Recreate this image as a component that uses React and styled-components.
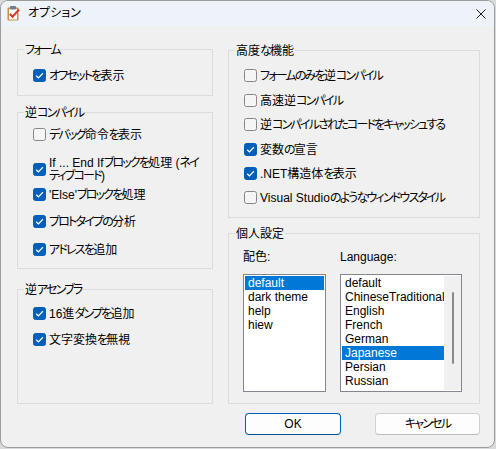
import React from "react";
import styled, { createGlobalStyle } from "styled-components";

const GlobalStyle = createGlobalStyle`
  html, body { margin: 0; padding: 0; }
  body {
    background: #d9dadc;
    font-family: "Liberation Sans", "Noto Sans CJK JP", sans-serif;
    font-size: 12px;
    color: #000;
  }
  * { box-sizing: border-box; }
`;

const Window = styled.div`
  width: 495px;
  height: 448px;
  border: 1px solid #9c9c9c;
  border-radius: 8px;
  overflow: hidden;
  background: #f0f0f0;
  display: flex;
  flex-direction: column;
  font-family: "Liberation Sans", "Noto Sans CJK JP", sans-serif;
  font-feature-settings: "palt";
  font-size: 12px;
`;

const TitleBar = styled.div`
  height: 25px;
  flex: none;
  background: #eef3f9;
  display: flex;
  align-items: center;
  padding-left: 4px;
  padding-right: 8px;
`;

const TitleText = styled.span`
  margin-left: 6px;
  line-height: 15px;
  flex: 1;
`;

const Kana = styled.span`
  letter-spacing: -1.8px;
`;

const jp = (text) =>
  text.split(/([\u3041-\u30ff]+)/).map((part, i) =>
    /[\u3041-\u30ff]/.test(part) ? <Kana key={i}>{part}</Kana> : part
  );

const Body = styled.div`
  flex: 1;
  padding: 23px 14px 0 16px;
  display: flex;
  flex-direction: column;
`;

const Columns = styled.div`
  display: grid;
  grid-template-columns: 196px 252px;
  column-gap: 15px;
`;

const Column = styled.div`
  display: flex;
  flex-direction: column;
`;

const Group = styled.div`
  position: relative;
  border: 1px solid #dcdcdc;
  height: ${(p) => p.$h}px;
  margin-top: ${(p) => p.$mt || 0}px;
  padding: ${(p) => p.$pt || 0}px 0 0 ${(p) => p.$pl ?? 15}px;
  display: flex;
  flex-direction: column;
`;

const Legend = styled.span`
  position: absolute;
  top: -7px;
  left: 6px;
  padding: 0 1px;
  line-height: 15px;
  background: #f0f0f0;
  white-space: nowrap;
`;

const Row = styled.label`
  display: flex;
  align-items: center;
  gap: 3px;
  height: ${(p) => (p.$multi ? 26 : 15)}px;
  line-height: ${(p) => (p.$multi ? 13 : 15)}px;
  margin-top: ${(p) => p.$mt || 0}px;
  white-space: nowrap;
  flex: none;
`;

const LabelText = styled.span`
  padding-top: 2px;
`;

const Box = styled.span`
  flex: none;
  width: 13px;
  height: 13px;
  border-radius: 2.5px;
  border: 1px solid ${(p) => (p.$on ? "#005fb8" : "#878787")};
  background: ${(p) => (p.$on ? "#005fb8" : "#f5f5f5")};
  display: flex;
  align-items: center;
  justify-content: center;
`;

const Check = ({ on, children, mt, multi }) => (
  <Row $mt={mt} $multi={multi}>
    <Box $on={on}>
      {on && (
        <svg width="11" height="11" viewBox="0 0 11 11">
          <path d="M2.2 5.7 L4.4 7.9 L8.9 3.2" fill="none" stroke="#fff" strokeWidth="1.3" />
        </svg>
      )}
    </Box>
    <LabelText>{children}</LabelText>
  </Row>
);

const Pref = styled.div`
  display: grid;
  grid-template-columns: 83px 122px;
  column-gap: 14px;
`;

const FieldLabel = styled.div`
  line-height: 15px;
  padding-top: 1px;
  margin-bottom: 9px;
`;

const List = styled.div`
  height: 118px;
  border: 1px solid #828790;
  background: #fff;
  padding: 1px ${(p) => (p.$scroll ? 0 : 1)}px 1px 1px;
  display: flex;
`;

const Items = styled.div`
  flex: 1;
  display: flex;
  flex-direction: column;
  min-width: 0;
`;

const Item = styled.div`
  height: 14px;
  line-height: 14px;
  padding-left: 3px;
  white-space: nowrap;
  background: ${(p) => (p.$sel ? "#0078d7" : "transparent")};
  color: ${(p) => (p.$sel ? "#fff" : "#000")};
`;

const ScrollTrack = styled.div`
  width: 17px;
  flex: none;
  background: #f0f0f0;
  display: flex;
  justify-content: center;
`;

const Thumb = styled.div`
  width: 2px;
  height: 72px;
  margin-top: 16px;
  border-radius: 1px;
  background: #8a8a8a;
`;

const Footer = styled.div`
  margin-top: 9px;
  display: flex;
  justify-content: flex-end;
  gap: 34px;
`;

const Button = styled.button`
  width: ${(p) => p.$w}px;
  height: 22px;
  border-radius: 4px;
  font: inherit;
  font-feature-settings: "palt";
  color: #000;
  background: #fdfdfd;
  border: 1px solid ${(p) => (p.$primary ? "#005fb8" : "#d0d0d0")};
  border-bottom-color: ${(p) => (p.$primary ? "#0050a0" : "#bcbcbc")};
  padding: 1px 0 0;
  line-height: 19px;
`;

const CloseIcon = () => (
  <svg width="10" height="10" viewBox="0 0 10 10">
    <path d="M0.5 0.5 L9.5 9.5 M9.5 0.5 L0.5 9.5" stroke="#1a1a1a" strokeWidth="1" />
  </svg>
);

const AppIcon = () => (
  <svg width="17" height="17" viewBox="0 0 17 17">
    <rect x="2.5" y="2.5" width="11" height="13" rx="1" fill="#c8903e" />
    <rect x="4" y="4" width="8" height="10.5" fill="#fbfbfb" />
    <rect x="5" y="1" width="6" height="3.5" rx="0.8" fill="#6d7f96" />
    <path d="M4.8 9 L7.5 11.8 L14 4.5" fill="none" stroke="#d9352a" strokeWidth="2" />
  </svg>
);

export default function App() {
  return (
    <>
      <GlobalStyle />
      <Window>
        <TitleBar>
          <AppIcon />
          <TitleText>オプション</TitleText>
          <CloseIcon />
        </TitleBar>
        <Body>
          <Columns>
            <Column>
              <Group $h={47} $pt={18}>
                <Legend>{jp("フォーム")}</Legend>
                <Check on>{jp("オフセットを表示")}</Check>
              </Group>
              <Group $h={157} $mt={16} $pt={14}>
                <Legend>{jp("逆コンパイル")}</Legend>
                <Check>{jp("デバッグ命令を表示")}</Check>
                <Check on multi mt={14}>
                  {jp("If ... End Ifブロックを処理 (ネイ")}
                  <br />
                  {jp("ティブコード)")}
                </Check>
                <Check on mt={5}>{jp("'Else'ブロックを処理")}</Check>
                <Check on mt={12}>{jp("プロトタイプの分析")}</Check>
                <Check on mt={13}>{jp("アドレスを追加")}</Check>
              </Group>
              <Group $h={115} $mt={20} $pt={16}>
                <Legend>{jp("逆アセンブラ")}</Legend>
                <Check on>{jp("16進ダンプを追加")}</Check>
                <Check on mt={11}>{jp("文字変換を無視")}</Check>
              </Group>
            </Column>
            <Column>
              <Group $h={168} $mt={1} $pt={17}>
                <Legend>{jp("高度な機能")}</Legend>
                <Check>{jp("フォームのみを逆コンパイル")}</Check>
                <Check mt={10}>{jp("高速逆コンパイル")}</Check>
                <Check mt={9}>{jp("逆コンパイルされたコードをキャッシュする")}</Check>
                <Check on mt={10}>{jp("変数の宣言")}</Check>
                <Check on mt={9}>{jp(".NET構造体を表示")}</Check>
                <Check mt={9}>{jp("Visual Studioのようなウィンドウスタイル")}</Check>
              </Group>
              <Group $h={171} $mt={15} $pt={15} $pl={14}>
                <Legend>{jp("個人設定")}</Legend>
                <Pref>
                  <div>
                    <FieldLabel>配色:</FieldLabel>
                    <List>
                      <Items>
                        <Item $sel>default</Item>
                        <Item>dark theme</Item>
                        <Item>help</Item>
                        <Item>hiew</Item>
                      </Items>
                    </List>
                  </div>
                  <div>
                    <FieldLabel>Language:</FieldLabel>
                    <List $scroll>
                      <Items>
                        <Item>default</Item>
                        <Item>ChineseTraditional</Item>
                        <Item>English</Item>
                        <Item>French</Item>
                        <Item>German</Item>
                        <Item $sel>Japanese</Item>
                        <Item>Persian</Item>
                        <Item>Russian</Item>
                      </Items>
                      <ScrollTrack>
                        <Thumb />
                      </ScrollTrack>
                    </List>
                  </div>
                </Pref>
              </Group>
            </Column>
          </Columns>
          <Footer>
            <Button $primary $w={96}>OK</Button>
            <Button $w={105}>{jp("キャンセル")}</Button>
          </Footer>
        </Body>
      </Window>
    </>
  );
}
